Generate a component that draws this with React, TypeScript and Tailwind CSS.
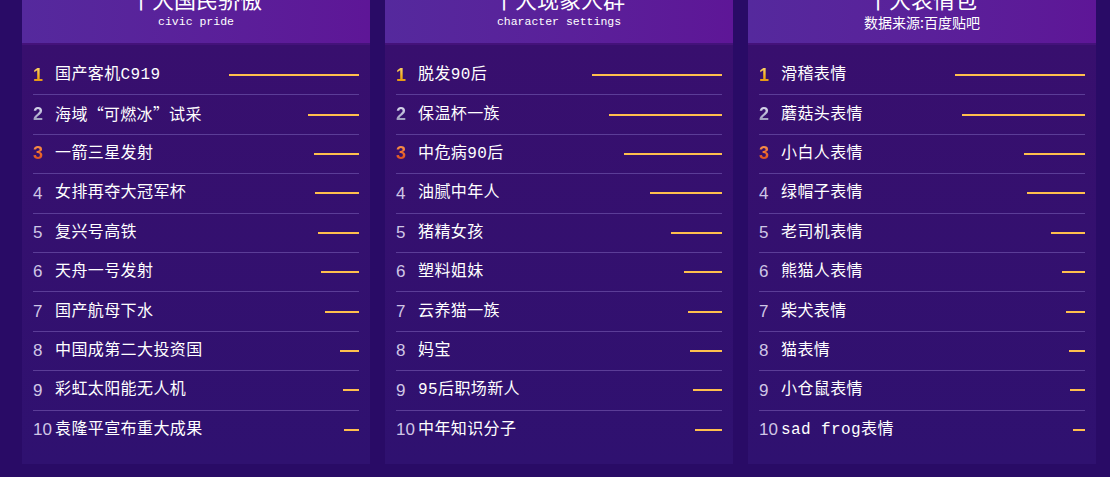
import type { CSSProperties, ReactNode } from "react";

type Row = { name: string; bar: number };

type Panel = {
  title: string;
  subtitle: string;
  subtitleCjk?: boolean;
  rows: Row[];
};

const panels: Panel[] = [
  {
    title: "十大国民骄傲",
    subtitle: "civic pride",
    rows: [
      { name: "国产客机C919", bar: 130 },
      { name: "海域“可燃冰”试采", bar: 51 },
      { name: "一箭三星发射", bar: 45 },
      { name: "女排再夺大冠军杯", bar: 44 },
      { name: "复兴号高铁", bar: 41 },
      { name: "天舟一号发射", bar: 38 },
      { name: "国产航母下水", bar: 34 },
      { name: "中国成第二大投资国", bar: 19 },
      { name: "彩虹太阳能无人机", bar: 16 },
      { name: "袁隆平宣布重大成果", bar: 15 },
    ],
  },
  {
    title: "十大现象人群",
    subtitle: "character settings",
    rows: [
      { name: "脱发90后", bar: 130 },
      { name: "保温杯一族", bar: 113 },
      { name: "中危病90后", bar: 98 },
      { name: "油腻中年人", bar: 72 },
      { name: "猪精女孩", bar: 51 },
      { name: "塑料姐妹", bar: 38 },
      { name: "云养猫一族", bar: 34 },
      { name: "妈宝", bar: 32 },
      { name: "95后职场新人", bar: 29 },
      { name: "中年知识分子", bar: 27 },
    ],
  },
  {
    title: "十大表情包",
    subtitle: "数据来源:百度贴吧",
    subtitleCjk: true,
    rows: [
      { name: "滑稽表情", bar: 130 },
      { name: "蘑菇头表情", bar: 123 },
      { name: "小白人表情", bar: 61 },
      { name: "绿帽子表情", bar: 58 },
      { name: "老司机表情", bar: 34 },
      { name: "熊猫人表情", bar: 23 },
      { name: "柴犬表情", bar: 19 },
      { name: "猫表情", bar: 16 },
      { name: "小仓鼠表情", bar: 15 },
      { name: "sad frog表情", bar: 12 },
    ],
  },
];

const medal: Record<number, string> = {
  1: "bg-gradient-to-b from-[#ffe88a] via-[#f6b21c] to-[#c8700a]",
  2: "bg-gradient-to-b from-[#f2f2ff] via-[#b8b7d4] to-[#7a78a0]",
  3: "bg-gradient-to-b from-[#ffb060] via-[#f06a2a] to-[#b8281a]",
};

function Rank({ n }: { n: number }) {
  if (n <= 3) {
    return (
      <span
        className={`w-[22px] bg-clip-text text-[18px] font-bold text-transparent [font-family:'Liberation_Sans',Arial,sans-serif] ${medal[n]}`}
      >
        {n}
      </span>
    );
  }
  return (
    <span className="w-[22px] text-[17px] text-[#cfc6e6] [font-family:'Liberation_Sans',Arial,sans-serif]">
      {n}
    </span>
  );
}

// quotes are full width in the original, give them the CJK face
function renderName(name: string): ReactNode[] {
  return name.split(/([“”])/).map((part, i) =>
    part === "“" || part === "”" ? (
      <span
        key={i}
        className="inline-block w-[16px] text-center [font-family:'Noto_Sans_CJK_SC',sans-serif]"
      >
        {part}
      </span>
    ) : (
      <span key={i}>{part}</span>
    )
  );
}

function RankPanel({ panel }: { panel: Panel }) {
  return (
    <div className="flex w-[348px] flex-col bg-[#36106e]">
      <div className="flex h-[75px] flex-col items-center justify-end border-b-2 border-[#44127a] bg-gradient-to-r from-[#55299d] to-[#5e1697] pb-[13px]">
        <div className="text-[22px] leading-[26px] text-white [font-family:'Noto_Sans_CJK_SC',sans-serif]">
          {panel.title}
        </div>
        <div
          className={
            panel.subtitleCjk
              ? "mt-[3px] text-[14px] leading-[16px] text-white [font-family:'Noto_Sans_CJK_SC',sans-serif]"
              : "mt-[3px] text-[11.5px] leading-[16px] text-white [font-family:'Liberation_Mono',monospace]"
          }
        >
          {panel.subtitle}
        </div>
      </div>
      <div className="bg-gradient-to-b from-[#380f6e] to-[#2f1170] px-[11px] pb-[14px] pt-[11px]">
        {panel.rows.map((row, i) => (
          <div
            key={row.name}
            className={`flex h-[39.4px] items-center ${i < panel.rows.length - 1 ? "border-b border-[#5b3d97]" : ""}`}
          >
            <Rank n={i + 1} />
            <span className="flex-1 text-[16px] tracking-[0.4px] text-white [font-family:'Liberation_Mono','Noto_Sans_CJK_SC',monospace]">
              {renderName(row.name)}
            </span>
            <span
              className="h-[2px] bg-[#ffbf4d]"
              style={{ width: row.bar } as CSSProperties}
            />
          </div>
        ))}
      </div>
    </div>
  );
}

export default function App() {
  return (
    <div className="h-[477px] w-[1110px] overflow-hidden bg-[#290b66]">
      <div className="-mt-[30px] flex gap-[15px] pl-[22px]">
        {panels.map((p) => (
          <RankPanel key={p.title} panel={p} />
        ))}
      </div>
    </div>
  );
}
